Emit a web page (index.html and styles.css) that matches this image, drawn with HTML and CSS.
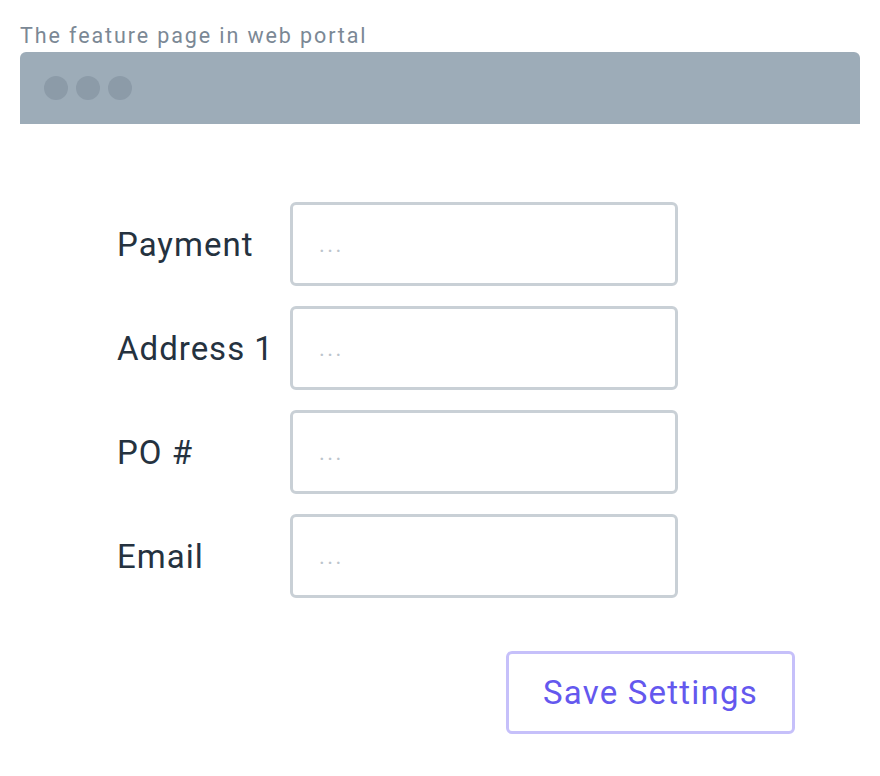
FILE: index.html
```html
<!DOCTYPE html>
<html>
<head>
<meta charset="utf-8">
<link rel="stylesheet" href="styles.css">
</head>
<body>
<div class="page">
  <div class="caption">The feature page in web portal</div>
  <div class="titlebar">
    <span class="dot"></span><span class="dot"></span><span class="dot"></span>
  </div>
  <form class="form">
    <div class="row">
      <label class="label">Payment</label>
      <div class="input"><span class="ph">...</span></div>
    </div>
    <div class="row">
      <label class="label">Address 1</label>
      <div class="input"><span class="ph">...</span></div>
    </div>
    <div class="row">
      <label class="label">PO #</label>
      <div class="input"><span class="ph">...</span></div>
    </div>
    <div class="row">
      <label class="label">Email</label>
      <div class="input"><span class="ph">...</span></div>
    </div>
    <div class="actions">
      <button type="button" class="btn">Save Settings</button>
    </div>
  </form>
</div>
</body>
</html>
```
FILE: styles.css
```css
html, body {
  margin: 0;
  padding: 0;
  background: #ffffff;
}
.page {
  padding: 20px 20px 0 20px;
  font-family: Roboto, "Liberation Sans", sans-serif;
}
.caption {
  font-size: 21.5px;
  line-height: 32px;
  color: #7b8895;
  letter-spacing: 1.9px;
}
.titlebar {
  height: 72px;
  background: #9dacb8;
  border-radius: 6px 6px 0 0;
  display: flex;
  align-items: center;
  gap: 8px;
  padding-left: 24px;
}
.dot {
  width: 24px;
  height: 24px;
  border-radius: 50%;
  background: #8c9ba8;
}
.form {
  display: flex;
  flex-direction: column;
  gap: 20px;
  padding: 78px 0 0 97px;
}
.row {
  display: flex;
  align-items: center;
}
.label {
  width: 173px;
  font-size: 33px;
  color: #25323f;
  letter-spacing: 1px;
}
.input {
  box-sizing: border-box;
  width: 388px;
  height: 84px;
  border: 3px solid #c9d0d6;
  border-radius: 6px;
  display: flex;
  align-items: center;
  padding-left: 26px;
}
.ph {
  font-size: 22px;
  color: #bcc4cc;
  letter-spacing: 2.5px;
}
.actions {
  padding: 33px 0 0 389px;
}
.btn {
  box-sizing: border-box;
  width: 289px;
  height: 83px;
  border: 3px solid #c6c0fa;
  border-radius: 6px;
  background: #ffffff;
  font-family: Roboto, "Liberation Sans", sans-serif;
  font-size: 33px;
  color: #6458ee;
  letter-spacing: 1.2px;
  padding: 0;
}
```
